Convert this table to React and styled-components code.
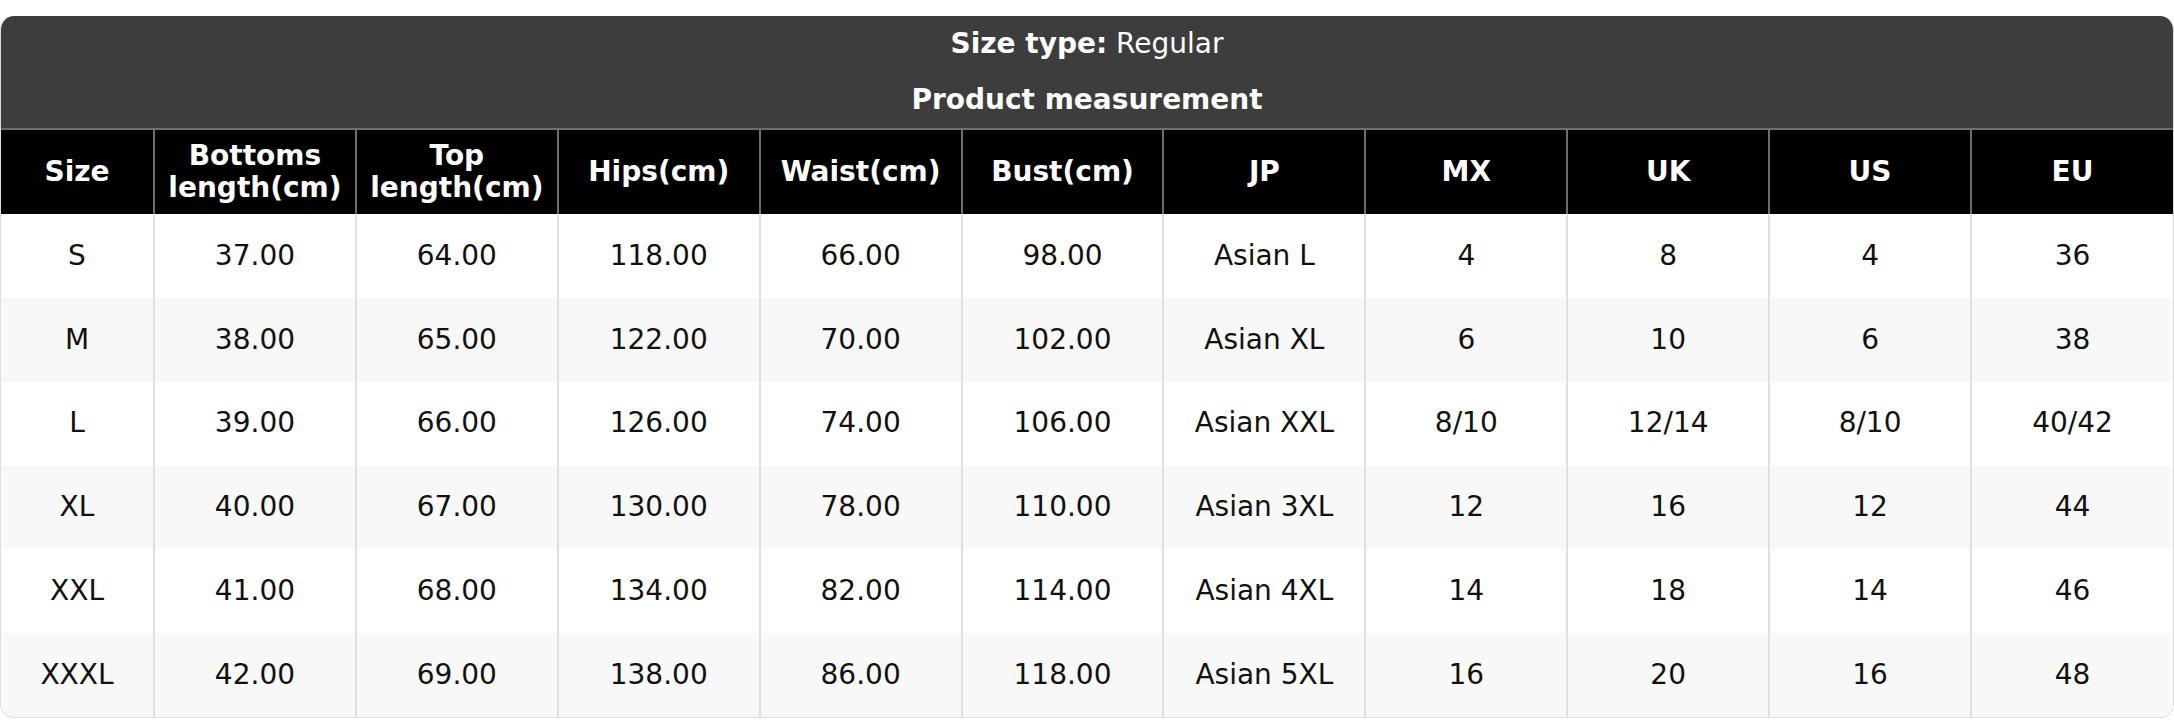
import React from "react";
import styled, { createGlobalStyle } from "styled-components";

const GlobalStyle = createGlobalStyle`
  html, body {
    margin: 0;
    padding: 0;
    background: #ffffff;
  }
  body {
    font-family: "DejaVu Sans", "Liberation Sans", sans-serif;
  }
`;

const columns = [
  "Size",
  "Bottoms length(cm)",
  "Top length(cm)",
  "Hips(cm)",
  "Waist(cm)",
  "Bust(cm)",
  "JP",
  "MX",
  "UK",
  "US",
  "EU",
];

const rows = [
  ["S", "37.00", "64.00", "118.00", "66.00", "98.00", "Asian L", "4", "8", "4", "36"],
  ["M", "38.00", "65.00", "122.00", "70.00", "102.00", "Asian XL", "6", "10", "6", "38"],
  ["L", "39.00", "66.00", "126.00", "74.00", "106.00", "Asian XXL", "8/10", "12/14", "8/10", "40/42"],
  ["XL", "40.00", "67.00", "130.00", "78.00", "110.00", "Asian 3XL", "12", "16", "12", "44"],
  ["XXL", "41.00", "68.00", "134.00", "82.00", "114.00", "Asian 4XL", "14", "18", "14", "46"],
  ["XXXL", "42.00", "69.00", "138.00", "86.00", "118.00", "Asian 5XL", "16", "20", "16", "48"],
];

function SizeChart() {
  return (
    <Page>
      <Card>
        <Heading>
          <TitleLine>
            <strong>Size type:</strong> Regular
          </TitleLine>
          <TitleLine $bold>Product measurement</TitleLine>
        </Heading>
        <Table>
          <colgroup>
            <col style={{ width: "153px" }} />
            {columns.slice(1).map((c) => (
              <col key={c} />
            ))}
          </colgroup>
          <thead>
            <tr>
              {columns.map((c) => (
                <HeadCell key={c}>{c}</HeadCell>
              ))}
            </tr>
          </thead>
          <tbody>
            {rows.map((row, i) => (
              <Row key={row[0]} $striped={i % 2 === 1}>
                {row.map((value, j) => (
                  <Cell key={j}>{value}</Cell>
                ))}
              </Row>
            ))}
          </tbody>
        </Table>
      </Card>
    </Page>
  );
}

const Page = styled.div`
  padding-top: 16px;
`;

const Card = styled.div`
  border: 1px solid #dcdcdc;
  border-top: none;
  border-radius: 14px;
  overflow: hidden;
  background: #ffffff;
`;

const Heading = styled.div`
  background: #3d3d3d;
  color: #ffffff;
  text-align: center;
  padding: 0 0 1px;
`;

const TitleLine = styled.div`
  font-size: 28px;
  line-height: 32.6px;
  padding: 12px 0 11px;
  font-weight: ${(p) => (p.$bold ? 700 : 400)};

  strong {
    font-weight: 700;
  }
`;

const Table = styled.table`
  width: 100%;
  border-collapse: collapse;
  table-layout: fixed;
  font-size: 28px;
`;

const HeadCell = styled.th`
  background: #000000;
  color: #ffffff;
  font-weight: 700;
  line-height: 32.6px;
  padding: 9.4px 6px;
  text-align: center;
  border-top: 2px solid #6e6e6e;
  border-left: 2px solid #6e6e6e;

  &:first-child {
    border-left: none;
  }
`;

const Row = styled.tr`
  background: ${(p) => (p.$striped ? "#f8f8f8" : "#ffffff")};
`;

const Cell = styled.td`
  color: #111111;
  line-height: 32.6px;
  padding: 25.6px 6px;
  text-align: center;
  border-left: 2px solid #e0e0e0;

  &:first-child {
    border-left: none;
  }
`;

export default function App() {
  return (
    <>
      <GlobalStyle />
      <SizeChart />
    </>
  );
}
